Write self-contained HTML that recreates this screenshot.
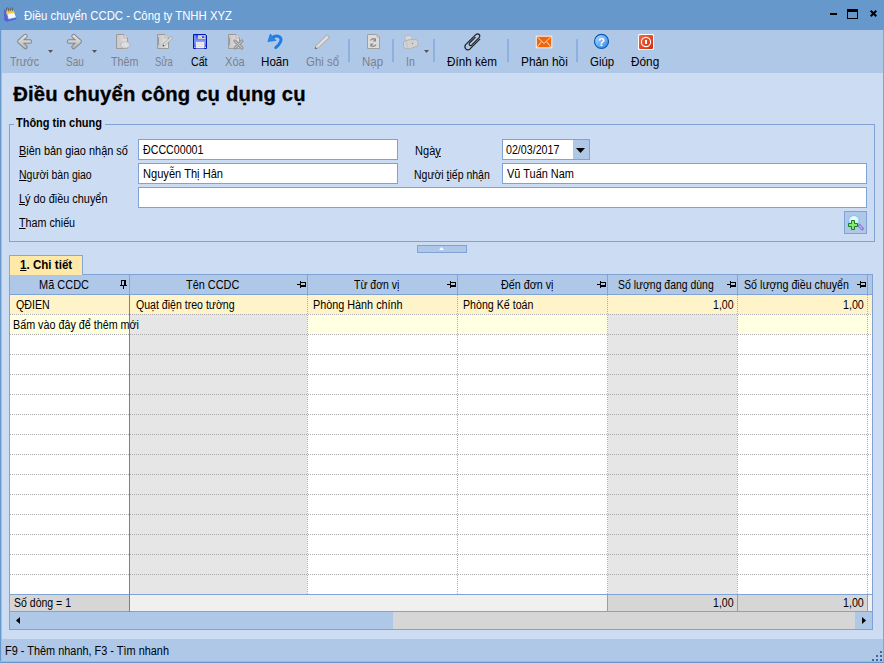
<!DOCTYPE html>
<html lang="vi">
<head>
<meta charset="utf-8">
<title>Điều chuyển CCDC - Công ty TNHH XYZ</title>
<style>
*{box-sizing:border-box;margin:0;padding:0}
html,body{width:884px;height:663px;overflow:hidden;background:#ccdcf2}
body{font-family:"Liberation Sans",sans-serif;font-size:11px;color:#000;position:relative}
.a{position:absolute}
.t{position:absolute;white-space:nowrap;line-height:1;transform-origin:0 50%}
u{text-decoration:underline;text-underline-offset:1px;text-decoration-thickness:1px}
.inp{position:absolute;height:20px;background:#fff;border:1px solid #80a2d4}
.vs{position:absolute;width:1px;background:#80a2d4}
.hs{position:absolute;height:1px;background:#80a2d4}
.hd{position:absolute;height:1px;background-image:repeating-linear-gradient(90deg,#acacb0 0 1px,transparent 1px 2px)}
.vd{position:absolute;width:1px;background-image:repeating-linear-gradient(180deg,#acacb0 0 1px,transparent 1px 2px)}
.sep{position:absolute;top:39px;width:2px;height:23px;background:#8eb0de}
svg{position:absolute;overflow:visible}
</style>
</head>
<body>
<div class="a" style="left:0;top:0;width:884px;height:663px;background:#ccdcf2;overflow:hidden">
  <!-- window chrome -->
  <div class="a" style="left:0;top:0;width:884px;height:30px;background:#6798cb"></div>
  <div class="a" style="left:0;top:30px;width:884px;height:43px;background:#afc8e8"></div>
  <div class="a" style="left:0;top:639px;width:884px;height:24px;background:#afc8e8"></div>
  <div class="a" style="left:0;top:30px;width:1px;height:633px;background:#6798cb"></div><div class="a" style="left:1px;top:30px;width:1px;height:633px;background:#a2bfe4"></div>
  <div class="a" style="left:883px;top:30px;width:1px;height:633px;background:#7ca6d8"></div>
  <div class="a" style="left:0;top:661px;width:884px;height:1px;background:#9ab9e1"></div><div class="a" style="left:0;top:662px;width:884px;height:1px;background:#6798cb"></div>
  <!-- window controls -->
  <div class="a" style="left:830px;top:13px;width:7px;height:2px;background:#000"></div>
  <div class="a" style="left:847px;top:9px;width:11px;height:10px;border:1px solid #000;border-top-width:3px"></div>
  <svg style="left:870px;top:10px" width="7" height="7" viewBox="0 0 7 7"><path d="M0.7 0.7L6.3 6.3M6.3 0.7L0.7 6.3" stroke="#000" stroke-width="2"/></svg>
  <!-- toolbar separators -->
  <div class="sep" style="left:348px"></div>
  <div class="sep" style="left:392px"></div>
  <div class="sep" style="left:433px"></div>
  <div class="sep" style="left:507px"></div>
  <div class="sep" style="left:576px"></div>
  <!-- dropdown arrows -->
  <svg style="left:48px;top:50px" width="5" height="3"><path d="M0 0h5L2.5 3z" fill="#555"/></svg>
  <svg style="left:92px;top:50px" width="5" height="3"><path d="M0 0h5L2.5 3z" fill="#555"/></svg>
  <svg style="left:424px;top:50px" width="5" height="3"><path d="M0 0h5L2.5 3z" fill="#555"/></svg>
  <!-- group box -->
  <div class="a" style="left:9px;top:124px;width:866px;height:118px;border:1px solid #80a2d4"></div>
  <div class="a" style="left:14px;top:118px;width:91px;height:12px;background:#ccdcf2"></div>
  <div class="inp" style="left:138px;top:139px;width:260px;height:21px"></div>
  <div class="inp" style="left:138px;top:163px;width:260px;height:21px"></div>
  <div class="inp" style="left:138px;top:187px;width:729px;height:21px"></div>
  <div class="inp" style="left:502px;top:139px;width:88px;height:21px"></div>
  <div class="a" style="left:573px;top:140px;width:16px;height:19px;background:#afc8e8"></div>
  <svg style="left:576px;top:148px" width="9" height="5"><path d="M0 0h9L4.5 5z" fill="#000"/></svg>
  <div class="inp" style="left:502px;top:163px;width:365px;height:21px"></div>
  <div class="a" style="left:844px;top:211px;width:23px;height:23px;background:#afc8e8;border:1px solid #80a2d4"></div>
  <!-- collapse handle -->
  <div class="a" style="left:417px;top:245px;width:50px;height:8px;background:#afc8e8;border:1px solid #80a2d4"></div>
  <svg style="left:439px;top:247px" width="5" height="3"><path d="M0 3h5L2.5 0z" fill="#fff"/></svg>
  <!-- grid -->
  <div class="a" style="left:9px;top:274px;width:864px;height:356px;background:#fff;border:1px solid #80a2d4"></div>
  <div class="a" style="left:10px;top:275px;width:862px;height:19px;background:#afc8e8"></div>
  <div class="a" style="left:10px;top:295px;width:862px;height:19px;background:#fff3c9"></div>
  <div class="a" style="left:10px;top:314px;width:862px;height:20px;background:#ffffe1"></div>
  <div class="a" style="left:130px;top:314px;width:177px;height:280px;background:#e6e6e6"></div>
  <div class="a" style="left:608px;top:314px;width:129px;height:280px;background:#e6e6e6"></div>
  <div class="hd" style="left:10px;top:314px;width:862px"></div>
<div class="hd" style="left:10px;top:334px;width:862px"></div>
<div class="hd" style="left:10px;top:354px;width:862px"></div>
<div class="hd" style="left:10px;top:374px;width:862px"></div>
<div class="hd" style="left:10px;top:394px;width:862px"></div>
<div class="hd" style="left:10px;top:414px;width:862px"></div>
<div class="hd" style="left:10px;top:434px;width:862px"></div>
<div class="hd" style="left:10px;top:454px;width:862px"></div>
<div class="hd" style="left:10px;top:474px;width:862px"></div>
<div class="hd" style="left:10px;top:494px;width:862px"></div>
<div class="hd" style="left:10px;top:514px;width:862px"></div>
<div class="hd" style="left:10px;top:534px;width:862px"></div>
<div class="hd" style="left:10px;top:554px;width:862px"></div>
<div class="hd" style="left:10px;top:574px;width:862px"></div>

  <!-- tab -->
  <div class="a" style="left:9px;top:255px;width:74px;height:20px;background:#ffe9a8;border:1px solid #86a7d8;border-bottom:none"></div>
  <!-- summary -->
  <div class="a" style="left:10px;top:595px;width:862px;height:17px;background:#f0f0f0"></div>
  <div class="a" style="left:10px;top:595px;width:119px;height:17px;background:#d6d6d6"></div>
  <div class="a" style="left:608px;top:595px;width:259px;height:17px;background:#d6d6d6"></div>
  <div class="hs" style="left:10px;top:594px;width:862px"></div>
  <div class="hs" style="left:10px;top:294px;width:862px"></div>
  <div class="hs" style="left:10px;top:611px;width:862px"></div>
  <!-- scrollbar -->
  <div class="a" style="left:10px;top:612px;width:862px;height:17px;background:#d6d6d6"></div>
  <div class="a" style="left:10px;top:612px;width:383px;height:17px;background:#afc8e8"></div>
  <div class="a" style="left:855px;top:612px;width:17px;height:17px;background:#afc8e8"></div>
  <svg style="left:16px;top:617px" width="4" height="7"><path d="M4 0v7L0 3.5z" fill="#000"/></svg>
  <svg style="left:862px;top:617px" width="4" height="7"><path d="M0 0v7L4 3.5z" fill="#000"/></svg>
  <div class="vs" style="left:307px;top:275px;height:19px"></div>
<div class="vd" style="left:307px;top:295px;height:299px"></div>
<div class="vs" style="left:457px;top:275px;height:19px"></div>
<div class="vd" style="left:457px;top:295px;height:299px"></div>
<div class="vs" style="left:607px;top:275px;height:19px"></div>
<div class="vd" style="left:607px;top:295px;height:299px"></div>
<div class="vs" style="left:737px;top:275px;height:19px"></div>
<div class="vd" style="left:737px;top:295px;height:299px"></div>
<div class="vs" style="left:867px;top:275px;height:19px"></div>
<div class="vd" style="left:867px;top:295px;height:299px"></div>
<div class="vs" style="left:129px;top:275px;height:19px"></div>
<div class="a" style="left:129px;top:295px;width:1px;height:317px;background:#808080"></div>
<div class="vs" style="left:607px;top:595px;height:17px"></div>
<div class="vs" style="left:737px;top:595px;height:17px"></div>
<div class="vs" style="left:867px;top:595px;height:17px"></div>

  <!-- resize grip -->
  <svg style="left:872px;top:651px" width="10" height="10" fill="#45629a"><rect x="8" y="0" width="2" height="2"/><rect x="4" y="4" width="2" height="2"/><rect x="8" y="4" width="2" height="2"/><rect x="0" y="8" width="2" height="2"/><rect x="4" y="8" width="2" height="2"/><rect x="8" y="8" width="2" height="2"/></svg>
  <svg style="left:0;top:0" width="884" height="663" viewBox="0 0 884 663">
    <defs>
      <linearGradient id="gdoc" x1="0" y1="0" x2="1" y2="0"><stop offset="0" stop-color="#c6c6c6"/><stop offset="1" stop-color="#e4e4e4"/></linearGradient>
      <linearGradient id="gflop" x1="0" y1="0" x2="0" y2="1"><stop offset="0" stop-color="#2a48ea"/><stop offset="0.45" stop-color="#7a96ff"/><stop offset="1" stop-color="#3a58ee"/></linearGradient>
      <linearGradient id="ghelp" x1="0" y1="0" x2="1" y2="1"><stop offset="0" stop-color="#b6dcff"/><stop offset="1" stop-color="#2f86e6"/></linearGradient>
      <linearGradient id="gred" x1="0" y1="0" x2="1" y2="1"><stop offset="0" stop-color="#ee6a48"/><stop offset="1" stop-color="#d42c08"/></linearGradient>
      <linearGradient id="garr" gradientUnits="userSpaceOnUse" x1="0" y1="35" x2="0" y2="48"><stop offset="0" stop-color="#e2e2e2"/><stop offset="0.5" stop-color="#d0d0d0"/><stop offset="1" stop-color="#b4b4b4"/></linearGradient>
      <radialGradient id="glens" cx="0.45" cy="0.35" r="0.7"><stop offset="0" stop-color="#ffffff"/><stop offset="0.6" stop-color="#d6eefc"/><stop offset="1" stop-color="#8ecbf2"/></radialGradient>
    </defs>
    <!-- app icon -->
    <g>
      <path d="M4 9.5L5.8 10.3L8.3 19.5L16.5 17.6L15.8 19.4L6.5 21.8L4.2 20z" fill="#5a5fd6"/>
      <path d="M5.8 10.3H13.8L16.5 17.6L8.3 19.5z" fill="#f4f8ff" stroke="#2f7fe0" stroke-width="0.7"/>
      <path d="M5.8 10.3H13.8L14.7 12.7L6.6 14.2z" fill="#f8c838"/>
      <path d="M6.4 11.5V9a1.1 1.3 0 0 1 2.2 0V11.5M10.4 11.2V9a1.1 1.3 0 0 1 2.2 0V11.2" fill="none" stroke="#606468" stroke-width="0.9"/>
    </g>
    <!-- back arrow -->
    <g fill="none" stroke-linecap="round" stroke-linejoin="round">
      <path d="M30 41.5H19.5M25.5 36L19.3 41.5L25.5 47" stroke="#868686" stroke-width="4.4"/>
      <path d="M30 41.5H19.5M25.5 36L19.3 41.5L25.5 47" stroke="url(#garr)" stroke-width="2.4"/>
      <path d="M69 41.5H79.5M73.5 36L79.7 41.5L73.5 47" stroke="#868686" stroke-width="4.4"/>
      <path d="M69 41.5H79.5M73.5 36L79.7 41.5L73.5 47" stroke="url(#garr)" stroke-width="2.4"/>
    </g>
    <!-- Them: doc + star -->
    <path d="M116.5 34.5H124L127.5 38V48.5H116.5z" fill="url(#gdoc)" stroke="#9a9a9a"/>
    <path d="M124 34.5V38H127.5" fill="#e8e8e8" stroke="#a4a4a4" stroke-width="0.8"/>
    <path transform="translate(125.7 45) scale(1.02 0.78) translate(-125.5 -46.1)" d="M125.5 41.2l1 1.5 1.8-.8-.1 1.9 2 .3-1.3 1.4 1.5 1.2-1.9.7.4 1.8-1.9-.2-.6 1.7-1.4-1.2-1.4 1.2-.6-1.7-1.9.2.4-1.8-1.9-.7 1.5-1.2-1.3-1.4 2-.3-.1-1.9 1.8.8z" fill="#dedede" stroke="#b2b2b2" stroke-width="0.7"/>
    <!-- Sua: doc + pencil -->
    <path d="M157.5 34.5H165L168.5 38V48.5H157.5z" fill="url(#gdoc)" stroke="#9a9a9a"/>
    <path d="M165 34.5V38H168.5" fill="#e8e8e8" stroke="#a4a4a4" stroke-width="0.8"/>
    <rect x="157" y="37.5" width="2" height="7.5" fill="#9c9c9c"/>
    <path d="M163.6 45.3L171.3 37.7" stroke="#a8a8a8" stroke-width="3" stroke-linecap="round"/>
    <path d="M164.2 44.7L171.3 37.7" stroke="#e2e2e2" stroke-width="1.5" stroke-linecap="round"/>
    <circle cx="163.5" cy="45.4" r="0.7" fill="#555"/>
    <!-- Cat: floppy -->
    <path d="M193.5 34.5H205.5L206.5 35.5V48.5H193.5z" fill="url(#gflop)" stroke="#0418b8"/>
    <rect x="198" y="35.2" width="7.5" height="3.8" fill="#d6d2ca"/>
    <rect x="202" y="36.2" width="2.2" height="1.8" fill="#2f4ff0"/>
    <rect x="196.2" y="42.2" width="7.8" height="5.8" fill="#e6e6e6" stroke="#fff8e4" stroke-width="0.7"/>
    <rect x="194.2" y="47" width="1" height="1" fill="#dfe6ff"/><rect x="205" y="47" width="1" height="1" fill="#dfe6ff"/>
    <rect x="194.3" y="35.3" width="1.2" height="4" fill="#8aa4ff"/>
    <!-- Xoa: doc + x -->
    <path d="M228.5 34.5H236L239.5 38V48.5H228.5z" fill="url(#gdoc)" stroke="#9a9a9a"/>
    <path d="M236 34.5V38H239.5" fill="#e8e8e8" stroke="#a4a4a4" stroke-width="0.8"/>
    <rect x="228" y="37.5" width="2" height="7.5" fill="#9c9c9c"/>
    <path d="M235 41L242 48M242 41L235 48" stroke="#9c9c9c" stroke-width="3.2" stroke-linecap="round"/>
    <path d="M235.3 41.3L241.7 47.7M241.7 41.3L235.3 47.7" stroke="#c4c4c4" stroke-width="1" stroke-linecap="round"/>
    <!-- Hoan: undo -->
    <path d="M273.5 36.8C278 34.6,282.3 37.3,280.6 41.6C279.6 44,277.6 46,275.7 47.6" fill="none" stroke="#1f7de4" stroke-width="2.9" stroke-linecap="round"/>
    <path d="M270.3 34L267.9 41.6L276 40.4z" fill="#2a86ea" stroke="#1468d0" stroke-width="0.6" stroke-linejoin="round"/>
    <!-- Ghi so: pencil -->
    <path d="M315 49L316 45.6L326.3 35.3Q327.4 34.6 328.6 35.8Q329.8 37 329 38.1L318.4 48z" fill="#d4d4d4" stroke="#a4a4a4" stroke-width="0.9" stroke-linejoin="round"/>
    <path d="M317.6 46.4L327.5 36.6" stroke="#e4e4e4" stroke-width="1.2"/>
    <path d="M315 49l.5-1.9 1.4 1.4z" fill="#505050"/>
    <!-- Nap: doc + refresh -->
    <path d="M367.5 34.5H377L379.5 37V48.5H367.5z" fill="#dcdcdc" stroke="#a0a0a0"/>
    <path d="M377 34.5V37H379.5" fill="#c8c8c8" stroke="#a8a8a8" stroke-width="0.8"/>
    <path d="M370.5 40.5C371.5 38.5,374 38.3,375.3 39.5" fill="none" stroke="#8a8a8a" stroke-width="1.3"/>
    <path d="M376 38v3.6h-3.4z" fill="#8a8a8a"/>
    <path d="M376 44.5C375 46.5,372.5 46.7,371.2 45.5" fill="none" stroke="#8a8a8a" stroke-width="1.3"/>
    <path d="M370.3 47v-3.6h3.4z" fill="#8a8a8a"/>
    <!-- In: printer -->
    <path d="M404.5 36L411 35.3L412.5 39.5L405.5 40.5z" fill="#d8d8d8" stroke="#b4b4b4" stroke-width="0.8"/>
    <path d="M403.5 42L409 39.8L416.5 39.5L418 42.5V46L409.5 48.8L405 48.5L403.5 46.5z" fill="#d2d2d2" stroke="#b0b0b0" stroke-width="0.9" stroke-linejoin="round"/>
    <path d="M407 42.5V48.3" stroke="#bdbdbd" stroke-width="0.8"/>
    <circle cx="412.4" cy="43.5" r="0.7" fill="#8a8a8a"/>
    <!-- Dinh kem: paperclip -->
    <path d="M475.2 37.3L469.5 43C468.5 44.2,469.6 46.3,471.4 45.4L479 37.7C481.3 35.2,478.2 32.8,475.8 34.6L465.6 44.6C463.6 47.5,466.5 51.3,469.8 49.2L479.8 39.2" fill="none" stroke="#1c1c1c" stroke-width="1.15" stroke-linecap="round" stroke-linejoin="round"/>
    <!-- Phan hoi: envelope -->
    <rect x="536.3" y="36.2" width="15.5" height="11.6" fill="#f0660a" stroke="#fff0e4" stroke-width="1"/>
    <path d="M537.4 37.3L544 43.4L550.6 37.3M537.4 46.8L541.5 41.6M550.6 46.8L546.5 41.6" fill="none" stroke="#ffe9d6" stroke-width="0.9"/>
    <!-- Giup: help -->
    <circle cx="601.5" cy="41.4" r="7" fill="url(#ghelp)" stroke="#0c55ac" stroke-width="1.2"/>
    <text x="601.5" y="45.5" font-family="Liberation Sans,sans-serif" font-weight="bold" font-size="11.5" fill="#fff" text-anchor="middle">?</text>
    <!-- Dong: power -->
    <rect x="638" y="34" width="16" height="16" rx="1.5" fill="#fff"/>
    <rect x="639" y="35" width="14" height="14" rx="1.2" fill="url(#gred)"/>
    <circle cx="646" cy="42" r="4.6" fill="none" stroke="#fff" stroke-width="1.1"/>
    <rect x="645" y="40" width="2" height="4" fill="#fff"/>
    <!-- search+ button icon -->
    <path d="M859 225.4L862.2 228.6" stroke="#8a74d6" stroke-width="3.4" stroke-linecap="round"/>
    <path d="M859.6 226L862 228.4" stroke="#c3b8f0" stroke-width="1.2" stroke-linecap="round"/>
    <circle cx="854" cy="220.8" r="5.4" fill="url(#glens)" stroke="#86c6f2" stroke-width="1.1"/>
    <path d="M851.5 220.5h3v3h3v3h-3v3h-3v-3h-3v-3h3z" fill="#8ee27a" stroke="#0b8a10" stroke-width="1" stroke-linejoin="round"/>
    <!-- pins -->
    <g fill="#000">
      <path d="M121 280h5v5h1v1h-3v3h-1v-3h-3v-1h1zM122 281v4h2v-4z"/>
      <path d="M297 284h3v-3h1v1h5v5h-5v1h-1v-3h-3zM301 283v2h4v-2z"/>
      <path d="M447 284h3v-3h1v1h5v5h-5v1h-1v-3h-3zM451 283v2h4v-2z"/>
      <path d="M597 284h3v-3h1v1h5v5h-5v1h-1v-3h-3zM601 283v2h4v-2z"/>
      <path d="M727 284h3v-3h1v1h5v5h-5v1h-1v-3h-3zM731 283v2h4v-2z"/>
      <path d="M857 284h3v-3h1v1h5v5h-5v1h-1v-3h-3zM861 283v2h4v-2z"/>
    </g>
  </svg>

<div class="t" style="left:23.8px;top:10.4px;font-size:12.5px;color:#fff;transform:scaleX(0.9082);">Điều chuyển CCDC - Công ty TNHH XYZ</div>
<div class="t" style="left:9.7px;top:56.4px;font-size:12.5px;color:#7d8189;transform:scaleX(0.8520);">Trước</div>
<div class="t" style="left:65.9px;top:56.4px;font-size:12.5px;color:#7d8189;transform:scaleX(0.8000);">Sau</div>
<div class="t" style="left:110.5px;top:56.4px;font-size:12.5px;color:#7d8189;transform:scaleX(0.8575);">Thêm</div>
<div class="t" style="left:155.3px;top:56.4px;font-size:12.5px;color:#7d8189;transform:scaleX(0.7519);">Sửa</div>
<div class="t" style="left:190.8px;top:56.4px;font-size:12.5px;transform:scaleX(0.8482);">Cất</div>
<div class="t" style="left:224.6px;top:56.4px;font-size:12.5px;color:#7d8189;transform:scaleX(0.8854);">Xóa</div>
<div class="t" style="left:261.3px;top:56.4px;font-size:12.5px;transform:scaleX(0.9301);">Hoãn</div>
<div class="t" style="left:305.5px;top:56.4px;font-size:12.5px;color:#7d8189;transform:scaleX(0.9131);">Ghi sổ</div>
<div class="t" style="left:362.3px;top:56.4px;font-size:12.5px;color:#7d8189;transform:scaleX(0.9155);">Nạp</div>
<div class="t" style="left:405.7px;top:56.4px;font-size:12.5px;color:#7d8189;transform:scaleX(0.8431);">In</div>
<div class="t" style="left:447.3px;top:56.4px;font-size:12.5px;transform:scaleX(0.9364);">Đính kèm</div>
<div class="t" style="left:520.7px;top:56.4px;font-size:12.5px;transform:scaleX(0.9481);">Phản hồi</div>
<div class="t" style="left:589.9px;top:56.4px;font-size:12.5px;transform:scaleX(0.9164);">Giúp</div>
<div class="t" style="left:630.7px;top:56.4px;font-size:12.5px;transform:scaleX(0.9434);">Đóng</div>
<div class="t" style="left:13.2px;top:83.8px;font-size:20.3px;font-weight:bold;-webkit-text-stroke:0.3px #000;letter-spacing:0.155px;">Điều chuyển công cụ dụng cụ</div>
<div class="t" style="left:16.0px;top:116.8px;font-size:12px;font-weight:bold;transform:scaleX(0.9150);">Thông tin chung</div>
<div class="t" style="left:18.9px;top:144.8px;font-size:12px;transform:scaleX(0.9117);"><u>B</u>iên bản giao nhận số</div>
<div class="t" style="left:18.9px;top:168.8px;font-size:12px;transform:scaleX(0.8728);"><u>N</u>gười bàn giao</div>
<div class="t" style="left:18.9px;top:192.8px;font-size:12px;transform:scaleX(0.9084);"><u>L</u>ý do điều chuyển</div>
<div class="t" style="left:18.9px;top:216.8px;font-size:12px;transform:scaleX(0.8945);"><u>T</u>ham chiếu</div>
<div class="t" style="left:415.1px;top:144.8px;font-size:12px;transform:scaleX(0.9209);">Ngà<u>y</u></div>
<div class="t" style="left:414.4px;top:168.8px;font-size:12px;transform:scaleX(0.8749);">Người <u>t</u>iếp nhận</div>
<div class="t" style="left:142.7px;top:143.8px;font-size:12px;transform:scaleX(0.8891);">ĐCCC00001</div>
<div class="t" style="left:142.9px;top:167.8px;font-size:12px;transform:scaleX(0.9249);">Nguyễn Thị Hân</div>
<div class="t" style="left:506.0px;top:143.8px;font-size:12px;transform:scaleX(0.8891);">02/03/2017</div>
<div class="t" style="left:506.7px;top:167.8px;font-size:12px;transform:scaleX(0.9131);">Vũ Tuấn Nam</div>
<div class="t" style="left:20.3px;top:259.3px;font-size:12.3px;font-weight:bold;transform:scaleX(0.9429);"><u>1</u>. Chi tiết</div>
<div class="t" style="left:39.1px;top:278.8px;font-size:12px;transform:scaleX(0.9145);">Mã CCDC</div>
<div class="t" style="left:185.9px;top:278.8px;font-size:12px;transform:scaleX(0.9099);">Tên CCDC</div>
<div class="t" style="left:354.4px;top:278.8px;font-size:12px;transform:scaleX(0.8725);">Từ đơn vị</div>
<div class="t" style="left:500.8px;top:278.8px;font-size:12px;transform:scaleX(0.8945);">Đến đơn vị</div>
<div class="t" style="left:618.0px;top:278.8px;font-size:12px;transform:scaleX(0.8700);">Số lượng đang dùng</div>
<div class="t" style="left:744.3px;top:278.8px;font-size:12px;transform:scaleX(0.8899);">Số lượng điều chuyển</div>
<div class="t" style="left:16.4px;top:298.8px;font-size:12px;transform:scaleX(0.8865);">QĐIEN</div>
<div class="t" style="left:135.5px;top:298.8px;font-size:12px;transform:scaleX(0.8806);">Quạt điện treo tường</div>
<div class="t" style="left:312.8px;top:298.8px;font-size:12px;transform:scaleX(0.9012);">Phòng Hành chính</div>
<div class="t" style="left:463.3px;top:298.8px;font-size:12px;transform:scaleX(0.8866);">Phòng Kế toán</div>
<div class="t" style="left:712.7px;top:298.8px;font-size:12px;transform:scaleX(0.8819);">1,00</div>
<div class="t" style="left:842.9px;top:298.8px;font-size:12px;transform:scaleX(0.8904);">1,00</div>
<div class="t" style="left:13.2px;top:318.8px;font-size:12px;transform:scaleX(0.8961);">Bấm vào đây để thêm mới</div>
<div class="t" style="left:13.9px;top:596.8px;font-size:12px;transform:scaleX(0.8761);">Số dòng = 1</div>
<div class="t" style="left:712.7px;top:596.8px;font-size:12px;transform:scaleX(0.8819);">1,00</div>
<div class="t" style="left:842.9px;top:596.8px;font-size:12px;transform:scaleX(0.8904);">1,00</div>
<div class="t" style="left:5.4px;top:644.8px;font-size:12px;transform:scaleX(0.9095);">F9 - Thêm nhanh, F3 - Tìm nhanh</div>
</div>
</body>
</html>
